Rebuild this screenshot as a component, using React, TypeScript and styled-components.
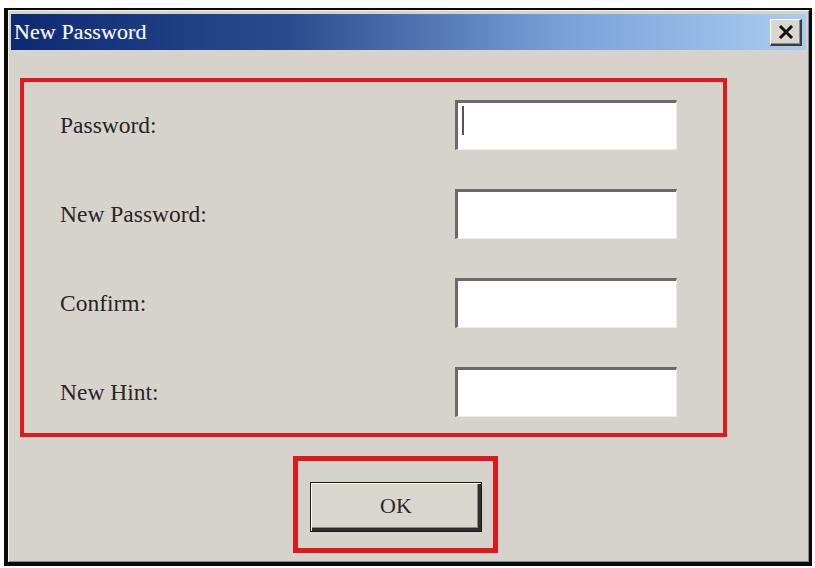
import { Fragment } from "react";
import styled, { createGlobalStyle } from "styled-components";

const GlobalStyle = createGlobalStyle`
	html, body {
		margin: 0;
		padding: 0;
		background: #ffffff;
	}
	body {
		font-family: "Liberation Serif", "Times New Roman", serif;
	}
`;

const Window = styled.div`
	box-sizing: border-box;
	width: 808px;
	height: 558px;
	margin: 8px 0 0 4px;
	border: 4px solid #0a0a0a;
	border-top-width: 2px;
	border-right-width: 3px;
	padding: 4px 3px 3px 3px;
	background: #d6d3cd;
	box-shadow: inset 1px 1px 0 #f2f2f2, inset -1px -1px 0 #8a8a8a;
	display: flex;
	flex-direction: column;
`;

const TitleBar = styled.div`
	height: 36px;
	display: flex;
	align-items: center;
	justify-content: space-between;
	padding: 0 4px 0 3px;
	background: linear-gradient(to right, #0c2a72 0%, #2a4c8e 35%, #7aa2d8 70%, #a9ccf1 100%);
`;

const Title = styled.span`
	color: #f4f6fb;
	font-size: 22px;
	letter-spacing: 0.1px;
	text-shadow: 0 0 1px rgba(255, 255, 255, 0.4);
`;

const CloseButton = styled.button`
	box-sizing: border-box;
	width: 32px;
	height: 27px;
	padding: 0;
	display: flex;
	align-items: center;
	justify-content: center;
	background: #d9d6d0;
	border: none;
	border-top: 1px solid #ffffff;
	border-left: 1px solid #ffffff;
	border-right: 2px solid #3c3c3c;
	border-bottom: 2px solid #3c3c3c;
	box-shadow: inset -1px -1px 0 #8c8c8c;
`;

const Body = styled.div`
	flex: 1;
	display: flex;
	flex-direction: column;
	padding: 28px 0 0 9px;
`;

const FormBox = styled.div`
	box-sizing: border-box;
	width: 707px;
	height: 359px;
	border: 4px solid #e2161b;
	padding: 18px 46px 0 36px;
	display: grid;
	grid-template-columns: 1fr 222px;
	grid-auto-rows: 50px;
	row-gap: 39px;
	align-items: center;
`;

const Label = styled.span`
	font-size: 23.5px;
	color: #262626;
`;

const Field = styled.div`
	box-sizing: border-box;
	height: 50px;
	background: #ffffff;
	border-top: 3px solid #6a6a6a;
	border-left: 3px solid #6a6a6a;
	border-right: 1px solid #ecebe8;
	border-bottom: 1px solid #ecebe8;
	padding: 3px 0 0 4px;
	display: flex;
	align-items: flex-start;
`;

const Caret = styled.span`
	display: block;
	width: 2px;
	height: 29px;
	background: #555555;
`;

const Footer = styled.div`
	margin-top: 19px;
	padding-left: 273px;
	display: flex;
`;

const ButtonBox = styled.div`
	border: 5px solid #e2161b;
	padding: 21px 11px 16px 12px;
`;

const OkButton = styled.button`
	box-sizing: border-box;
	width: 172px;
	height: 50px;
	background: #d9d6d0;
	border: 1px solid #1a1a1a;
	box-shadow: inset 1px 1px 0 #ffffff, inset -3px -3px 0 #2e2e2e, inset -4px -4px 0 #8a8a8a;
	font-family: "Liberation Serif", "Times New Roman", serif;
	font-size: 22px;
	color: #2a2a2a;
	padding: 0 0 2px 0;
`;

const fields = [
	{ label: "Password:", focused: true },
	{ label: "New Password:", focused: false },
	{ label: "Confirm:", focused: false },
	{ label: "New Hint:", focused: false },
];

const App = () => {
	return (
		<>
			<GlobalStyle />
			<Window>
				<TitleBar>
					<Title>New Password</Title>
					<CloseButton aria-label="Close">
						<svg width="16" height="14" viewBox="0 0 16 14">
							<path d="M2 1 L14 13 M14 1 L2 13" stroke="#111" strokeWidth="3" />
						</svg>
					</CloseButton>
				</TitleBar>
				<Body>
					<FormBox>
						{fields.map((f) => (
							<Fragment key={f.label}>
								<Label>{f.label}</Label>
								<Field>{f.focused && <Caret />}</Field>
							</Fragment>
						))}
					</FormBox>
					<Footer>
						<ButtonBox>
							<OkButton>OK</OkButton>
						</ButtonBox>
					</Footer>
				</Body>
			</Window>
		</>
	);
};

export default App;
